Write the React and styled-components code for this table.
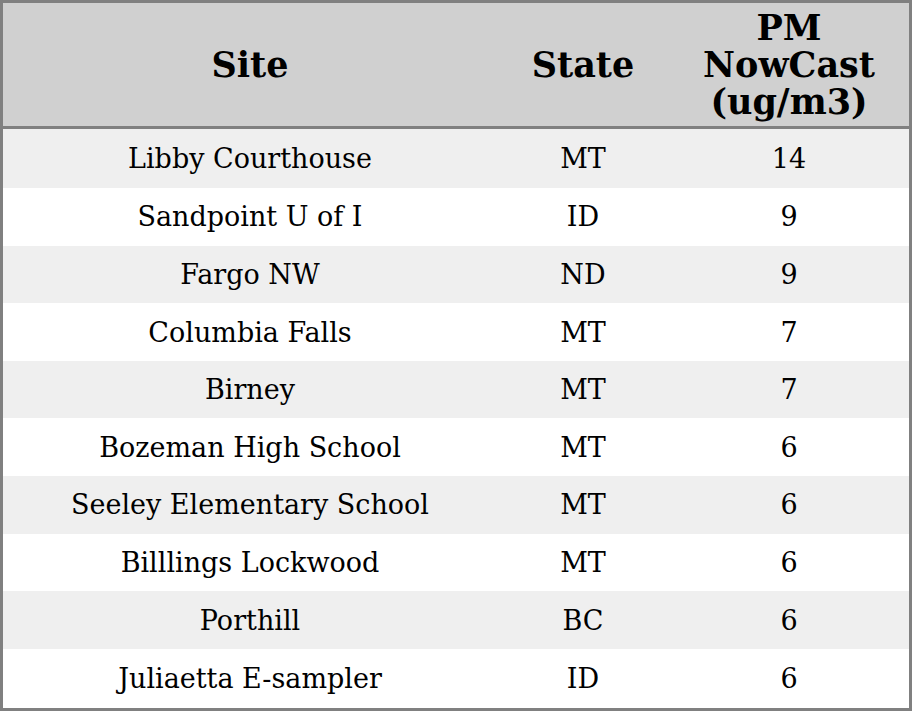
import React from 'react';
import styled, { createGlobalStyle } from 'styled-components';

const GlobalStyle = createGlobalStyle`
  html, body {
    margin: 0;
    padding: 0;
    background: #ffffff;
  }
  body {
    font-family: "DejaVu Serif", serif;
  }
`;

const Table = styled.table`
  width: 912px;
  height: 711px;
  border-collapse: collapse;
  border: 3px solid #808080;
  box-sizing: border-box;
  font-family: "DejaVu Serif", serif;
  color: #000;
  table-layout: fixed;
`;

const HeadRow = styled.tr`
  background: #d0d0d0;
  border-bottom: 3px solid #808080;
  height: 126px;
`;

const HeadCell = styled.th`
  font-size: 35px;
  font-weight: bold;
  line-height: 37px;
  text-align: center;
  padding: 0;
  width: ${props => props.width};
`;

const Row = styled.tr`
  background: ${props => (props.striped ? '#efefef' : '#ffffff')};
`;

const Cell = styled.td`
  font-size: 27px;
  text-align: center;
  padding: 0;
`;

const rows = [
  ['Libby Courthouse', 'MT', 14],
  ['Sandpoint U of I', 'ID', 9],
  ['Fargo NW', 'ND', 9],
  ['Columbia Falls', 'MT', 7],
  ['Birney', 'MT', 7],
  ['Bozeman High School', 'MT', 6],
  ['Seeley Elementary School', 'MT', 6],
  ['Billlings Lockwood', 'MT', 6],
  ['Porthill', 'BC', 6],
  ['Juliaetta E-sampler', 'ID', 6]
];

export default function App() {
  return (
    <>
      <GlobalStyle />
      <Table>
        <thead>
          <HeadRow>
            <HeadCell width="494px">Site</HeadCell>
            <HeadCell width="172px">State</HeadCell>
            <HeadCell>PM<br />NowCast<br />(ug/m3)</HeadCell>
          </HeadRow>
        </thead>
        <tbody>
          {rows.map((r, i) => (
            <Row key={r[0]} striped={i % 2 === 0}>
              <Cell>{r[0]}</Cell>
              <Cell>{r[1]}</Cell>
              <Cell>{r[2]}</Cell>
            </Row>
          ))}
        </tbody>
      </Table>
    </>
  );
}
